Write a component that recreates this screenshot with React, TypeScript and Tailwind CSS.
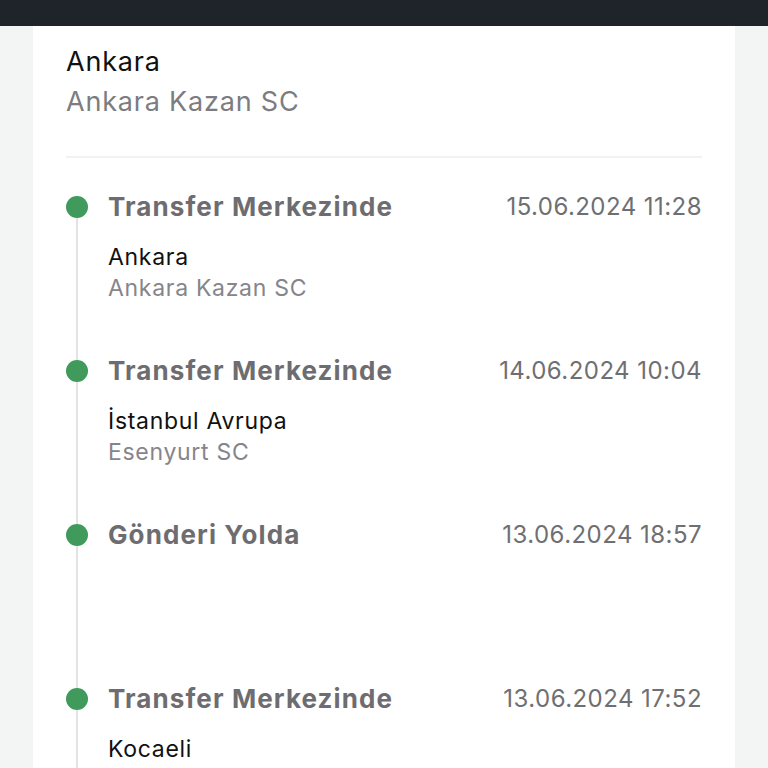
const events = [
  { title: "Transfer Merkezinde", date: "15.06.2024 11:28", city: "Ankara", branch: "Ankara Kazan SC" },
  { title: "Transfer Merkezinde", date: "14.06.2024 10:04", city: "İstanbul Avrupa", branch: "Esenyurt SC" },
  { title: "Gönderi Yolda", date: "13.06.2024 18:57" },
  { title: "Transfer Merkezinde", date: "13.06.2024 17:52", city: "Kocaeli", branch: "Kocaeli SC" },
];

type TrackingEvent = (typeof events)[number] & { city?: string; branch?: string };

function TimelineItem({ event, first }: { event: TrackingEvent; first: boolean }) {
  return (
    <div className="flex h-[164px] gap-[20px]">
      <div className="relative flex w-[22px] shrink-0 flex-col items-center">
        {!first && <div className="absolute left-[10px] top-0 h-[5px] w-[2px] bg-[#e3e3e3]" />}
        <div className="relative z-10 mt-[5px] h-[22px] w-[22px] rounded-full bg-[#3f9a5b]" />
        <div className="w-[2px] flex-1 bg-[#e3e3e3]" />
      </div>
      <div className="min-w-0 flex-1">
        <div className="flex items-center justify-between">
          <span className="text-[26px] font-bold leading-[32px] tracking-[1.1px] text-[#6d6d71]">{event.title}</span>
          <span className="text-[24px] leading-[32px] tracking-[0.45px] text-[#6f6f72]">{event.date}</span>
        </div>
        {event.city && (
          <div className="mt-[19px] text-[23px] leading-[31px] tracking-[0.7px]">
            <p className="text-[#111111]">{event.city}</p>
            <p className="text-[#85858a]">{event.branch}</p>
          </div>
        )}
      </div>
    </div>
  );
}

export default function App() {
  return (
    <div className="flex h-[768px] flex-col overflow-hidden bg-[#f3f4f4] font-['Inter',sans-serif]">
      <div className="h-[26px] shrink-0 bg-[#1f232a]" />
      <div className="mx-[33px] flex-1 bg-white px-[33px] pt-[20px]">
        <p className="text-[27px] leading-[32px] tracking-[0.8px] text-[#111111]">Ankara</p>
        <p className="mt-[8px] text-[27px] leading-[32px] tracking-[0.8px] text-[#7c7c81]">Ankara Kazan SC</p>
        <div className="mt-[38px] h-[2px] bg-[#f2f2f2]" />
        <div className="mt-[33px]">
          {events.map((e, i) => (
            <TimelineItem key={i} event={e} first={i === 0} />
          ))}
        </div>
      </div>
    </div>
  );
}
